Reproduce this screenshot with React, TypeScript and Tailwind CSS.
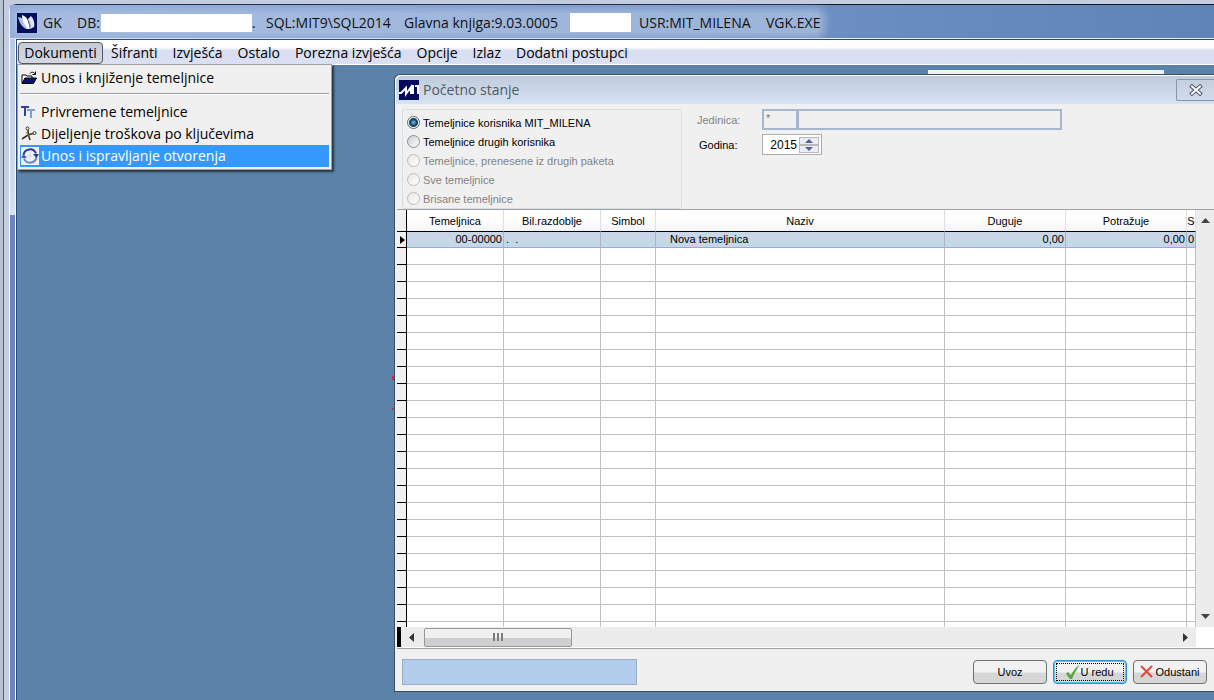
import type { ReactNode } from "react";

const MENU = ["Šifranti", "Izvješća", "Ostalo", "Porezna izvješća", "Opcije", "Izlaz", "Dodatni postupci"];

const FILTERS = [
  { id: "mine", label: "Temeljnice korisnika MIT_MILENA", disabled: false },
  { id: "others", label: "Temeljnice drugih korisnika", disabled: false },
  { id: "imported", label: "Temeljnice, prenesene iz drugih paketa", disabled: true },
  { id: "all", label: "Sve temeljnice", disabled: true },
  { id: "deleted", label: "Brisane temeljnice", disabled: true },
];

const COLUMNS = [
  { label: "Temeljnica", width: "w-[97px]" },
  { label: "Bil.razdoblje", width: "w-[97px]" },
  { label: "Simbol", width: "w-[55px]" },
  { label: "Naziv", width: "" },
  { label: "Duguje", width: "w-[121px]" },
  { label: "Potražuje", width: "w-[121px]" },
  { label: "S", width: "w-[9px]" },
];

const EMPTY_ROWS = Array.from({ length: 22 }, (_, i) => i);

function AppIcon() {
  return (
    <svg width="20" height="20" viewBox="0 0 20 20" className="shrink-0">
      <rect width="20" height="20" fill="#060e5c" />
      <path d="M1 4l4 1 8 11H9C5 14 2 9 1 4z" fill="#b4c0e0" />
      <path d="M5 2c3 1 5 3 6 6l2 8h-2C7 12 5 7 5 2z" fill="#fff" />
      <path d="M11 6l3-3c3 3 4 8 3 11l-4 2c0-4-1-7-2-10z" fill="#dbe3f4" />
      <path d="M12 8c1 3 2 5 1 8" fill="none" stroke="#8d9ccc" />
    </svg>
  );
}

function DialogIcon() {
  return (
    <svg width="20" height="20" viewBox="0 0 20 20" className="shrink-0" fill="none" stroke="#fff" strokeWidth="2">
      <rect width="20" height="20" fill="#060a5c" stroke="none" />
      <path d="M0 13h2l5-5v6l5-7v7M14 5v9M16 6h4M19 6v8" />
    </svg>
  );
}

function FolderIcon() {
  return (
    <svg width="16" height="14" viewBox="0 0 16 14">
      <path d="M1 12V4h4l1 1h5v2" fill="#fff" stroke="#000" />
      <path d="M1 12.500L4 7h11.500l-3 5.500z" fill="#0a1470" stroke="#000" />
      <path d="M9 2.500c1.500-2 4-1.500 5 .5M14.500 0.500v3h-3" fill="none" stroke="#000" />
    </svg>
  );
}

function FontIcon() {
  return (
    <svg width="16" height="14" viewBox="0 0 16 14" fill="none" strokeWidth="2">
      <path d="M0 2h8M4 2v9" stroke="#34409c" />
      <path d="M6 5h8M10 5v8" stroke="#7d9fd4" />
    </svg>
  );
}

function SplitIcon() {
  return (
    <svg width="16" height="16" viewBox="0 0 16 16" fill="none" stroke="#3a3526">
      <circle cx="6.500" cy="2.500" r="1.500" />
      <circle cx="13.500" cy="7" r="1.500" />
      <path d="M7 4l0.500 5 1.500 5M12 7.500L7 9l-6 4" strokeWidth="1.600" />
      <path d="M5 6l4 5" stroke="#8c8468" />
    </svg>
  );
}

function RefreshIcon() {
  return (
    <svg width="18" height="18" viewBox="0 0 18 18" fill="none">
      <rect width="18" height="18" fill="#eef1f8" />
      <path d="M9 5v8M5 9h8" stroke="#d3d9e6" />
      <path d="M2.500 8A6.500 6.500 0 0 1 15 6.500" stroke="#2c3a94" strokeWidth="2" />
      <path d="M15.500 10A6.500 6.500 0 0 1 3 11.500" stroke="#7287b8" strokeWidth="2" />
      <path d="M12 7h6l-2.500 4z" fill="#2c3a94" />
      <path d="M0 11h6L2.500 7z" fill="#4e62a6" />
    </svg>
  );
}

function MenuItem({ icon, children, active = false }: { icon: ReactNode; children: ReactNode; active?: boolean }) {
  return (
    <button
      role="menuitem"
      className={`flex h-[22px] w-full items-center text-left text-sm whitespace-nowrap ${
        active ? "bg-[#3399ff] text-white" : "text-black"
      }`}
    >
      <span className="flex w-[21px] shrink-0 items-center pl-px">{icon}</span>
      {children}
    </button>
  );
}

function DocumentsMenu() {
  return (
    <div
      role="menu"
      className="absolute top-6 left-0 z-20 w-[315px] border border-[#a0a0a0] bg-[#f0f0f0] p-0.5 shadow-[2px_2px_2px_rgba(0,0,0,0.6)]"
    >
      <MenuItem icon={<FolderIcon />}>Unos i knjiženje temeljnice</MenuItem>
      <div className="mt-1 mb-1.5 h-0.5 border-t border-b border-t-[#a0a0a0] border-b-white" />
      <MenuItem icon={<FontIcon />}>Privremene temeljnice</MenuItem>
      <MenuItem icon={<SplitIcon />}>Dijeljenje troškova po ključevima</MenuItem>
      <MenuItem icon={<RefreshIcon />} active>
        Unos i ispravljanje otvorenja
      </MenuItem>
    </div>
  );
}

function TitleBar() {
  return (
    <header className="flex h-[34px] items-center border-b border-[#e6edf8] bg-linear-to-r from-[#8fabd8] via-[#7394c8] to-[#5f84b8] pt-0.5 pl-[7px]">
      <div className="flex h-5 items-center rounded bg-[#b0c3e2]/70 text-sm whitespace-nowrap text-[#111] shadow-[0_0_8px_5px_rgba(176,195,226,0.7)]">
        <AppIcon />
        <span className="w-[39px] pl-1.5">GK</span>
        <span className="w-[25px] pl-px">DB:</span>
        <span className="h-[18px] w-[151px] bg-white" />
        <span className="w-[14px]">.</span>
        <span className="w-[138px]">SQL:MIT9\SQL2014</span>
        <span className="w-[166px]">Glavna knjiga:9.03.0005</span>
        <span className="h-[19px] w-[61px] bg-white" />
        <span className="w-[135px] pl-2">USR:MIT_MILENA</span>
        <span>VGK.EXE</span>
      </div>
    </header>
  );
}

function MenuBar() {
  return (
    <nav className="relative flex h-[26px] items-end gap-px border-t border-b border-t-[#2c4a72] border-b-white bg-linear-to-b from-white from-30% via-[#d8deef] via-45% to-[#dbe0f2] pl-px text-sm whitespace-nowrap text-black">
      <button className="h-[22px] w-[85px] rounded-sm border border-[#55585f] bg-linear-to-b from-[#c6cbd8] to-[#d3d7e2]">
        Dokumenti
      </button>
      {MENU.map((label) => (
        <button key={label} className="h-[22px] px-[7px]">
          {label}
        </button>
      ))}
      <DocumentsMenu />
    </nav>
  );
}

function Filters() {
  return (
    <fieldset className="flex w-[280px] flex-col rounded-xs border border-[#d5dfe5] pt-[3px] pl-1">
      {FILTERS.map((f) => (
        <label
          key={f.id}
          className={`flex h-[19px] items-center gap-[3px] whitespace-nowrap ${f.disabled ? "text-[#838383]" : "text-black"}`}
        >
          <input
            type="radio"
            name="filter"
            defaultChecked={f.id === "mine"}
            disabled={f.disabled}
            className="size-[13px] appearance-none rounded-full border border-[#8e8f8f] bg-linear-to-br from-[#c9ccd0] to-white checked:border-[#5b6e7e] checked:bg-[radial-gradient(circle,#7fc3ea_0,#16476e_3px,#1c3f5c_4px,#f4f4f4_5px)] disabled:border-[#bcbcbc] disabled:from-[#e6e6e6]"
          />
          {f.label}
        </label>
      ))}
    </fieldset>
  );
}

function UnitAndYear() {
  return (
    <div className="flex flex-1 flex-col gap-1 pl-[15px]">
      <div className="flex h-[21px] items-center">
        <label htmlFor="unit" className="w-[65px] shrink-0 text-[#838383]">
          Jedinica:
        </label>
        <input id="unit" disabled defaultValue="*" className="h-[21px] w-9 border-2 border-[#a7b7d0] px-0.5 pb-1 text-[#777]" />
        <input aria-label="Naziv jedinice" disabled className="-ml-px h-[21px] w-[265px] border-2 border-[#a7b7d0]" />
      </div>
      <div className="flex h-[21px] items-center">
        <label htmlFor="year" className="w-[65px] shrink-0 pl-0.5">
          Godina:
        </label>
        <div className="flex h-[21px] w-[60px] items-center border border-[#abadb3] bg-white pr-0.5">
          <input id="year" defaultValue="2015" className="w-9 pr-0.5 text-right text-xs outline-none" />
          <div className="flex flex-1 flex-col">
            <button aria-label="Više" className="flex h-2 items-center justify-center border border-[#b5b8bf] bg-[#eceef2]">
              <svg width="8" height="4" viewBox="0 0 8 4">
                <path d="M0 4l4-4 4 4z" fill="#4f61a6" />
              </svg>
            </button>
            <button aria-label="Manje" className="flex h-2 items-center justify-center border border-[#b5b8bf] bg-[#eceef2]">
              <svg width="8" height="4" viewBox="0 0 8 4">
                <path d="M0 0l4 4 4-4z" fill="#4f61a6" />
              </svg>
            </button>
          </div>
        </div>
      </div>
    </div>
  );
}

function Grid() {
  return (
    <table className="min-w-0 flex-1 table-fixed border-separate border-spacing-0 bg-white">
      <colgroup>
        <col className="w-2.5" />
        {COLUMNS.map((c) => (
          <col key={c.label} className={c.width} />
        ))}
      </colgroup>
      <thead>
        <tr className="h-[22px]">
          <td className="border-r border-b border-black bg-[#f0f0f0] p-0" />
          {COLUMNS.map((c) => (
            <th
              key={c.label}
              className="overflow-hidden border-r border-b border-r-[#dcdfe3] border-b-black bg-linear-to-b from-white from-45% to-[#f2f3f5] p-0 font-normal"
            >
              {c.label}
            </th>
          ))}
        </tr>
      </thead>
      <tbody>
        <tr className="h-4 [&>td]:h-4 [&>td]:overflow-hidden [&>td]:p-0 [&>td]:leading-[15px] [&>td]:whitespace-nowrap [&>td+td]:border-r [&>td+td]:border-b [&>td+td]:border-r-[#a9b4c4] [&>td+td]:border-b-[#1fe4ea] [&>td+td]:bg-[#c8d6e8]">
          <td className="border-r border-b border-black bg-[#f0f0f0]">
            <svg width="6" height="8" viewBox="0 0 6 8" className="ml-auto">
              <path d="M0 0l5 4-5 4z" fill="#000" />
            </svg>
          </td>
          <td className="text-right">
            <span className="pr-px">00-00000</span>
          </td>
          <td>
            <span className="pl-0.5">.&nbsp; .</span>
          </td>
          <td />
          <td>
            <span className="pl-3.5">Nova temeljnica</span>
          </td>
          <td className="text-right">
            <span className="pr-px">0,00</span>
          </td>
          <td className="text-right">
            <span className="pr-px">0,00</span>
          </td>
          <td className="text-center">0</td>
        </tr>
        {EMPTY_ROWS.map((row) => (
          <tr key={row} className="h-[17px]">
            <td className="border-r border-b border-black bg-[#f0f0f0] p-0" />
            {COLUMNS.map((c) => (
              <td key={c.label} className="border-r border-b border-[#c0c0c0] p-0" />
            ))}
          </tr>
        ))}
        <tr className="h-[5px]">
          <td className="border-r border-black bg-[#f0f0f0] p-0" />
          {COLUMNS.map((c) => (
            <td key={c.label} className="border-r border-[#c0c0c0] p-0" />
          ))}
        </tr>
      </tbody>
    </table>
  );
}

function VerticalScroll() {
  return (
    <div className="flex w-[18px] shrink-0 flex-col items-center justify-between bg-[#ececec] py-2">
      <svg width="9" height="5" viewBox="0 0 9 5">
        <path d="M0 5l4.500-5L9 5z" fill="#444" />
      </svg>
      <svg width="9" height="5" viewBox="0 0 9 5">
        <path d="M0 0l4.500 5L9 0z" fill="#444" />
      </svg>
    </div>
  );
}

function HorizontalScroll() {
  return (
    <div className="flex h-[21px] border-b border-white">
      <div className="w-1 bg-black" />
      <div className="flex flex-1 items-center bg-[#ececec] pr-2 pl-2">
        <svg width="5" height="9" viewBox="0 0 5 9">
          <path d="M5 0L0 4.500 5 9z" fill="#333" />
        </svg>
        <div className="ml-2.5 flex h-[19px] w-[148px] items-center justify-center gap-0.5 rounded-xs border border-[#979797] bg-linear-to-b from-[#f0f0f0] from-50% to-[#cfcfd2] to-55%">
          <i className="h-2 w-0.5 bg-[#7c7c7c]" />
          <i className="h-2 w-0.5 bg-[#7c7c7c]" />
          <i className="h-2 w-0.5 bg-[#7c7c7c]" />
        </div>
        <svg width="5" height="9" viewBox="0 0 5 9" className="ml-auto">
          <path d="M0 0l5 4.500L0 9z" fill="#333" />
        </svg>
      </div>
      <div className="w-[18px] bg-white" />
    </div>
  );
}

function Footer() {
  const button =
    "flex h-6 w-[74px] items-center justify-center rounded-sm border bg-linear-to-b from-[#f2f2f2] from-50% to-[#d6d6d6] to-55%";

  return (
    <footer className="flex h-[43px] items-center gap-1.5 border-t border-[#a0a0a0] pt-[3px] pr-[7px] pl-[5px]">
      <div className="mr-auto h-[26px] w-[235px] border border-[#9aafc6] bg-[#b1cdeb]" />
      <button className={`${button} border-[#707070]`}>Uvoz</button>
      <button className={`${button} border-[#2a8fc4] p-0.5 shadow-[inset_0_0_0_1px_#5fc6ee]`}>
        <span className="flex h-full w-full items-center justify-center border border-dotted border-black">
          <svg width="14" height="14" viewBox="0 0 14 14">
            <path d="M0 9l2-2 3 3C7 6 10 2 13.500 0 11 4 8 9 6 14H4z" fill="#58a83c" />
          </svg>
          U redu
        </span>
      </button>
      <button className={`${button} gap-0.5 border-[#707070]`}>
        <svg width="13" height="13" viewBox="0 0 13 13" fill="none" stroke="#e8483a" strokeWidth="2">
          <path d="M1 1l11 11M12 1L1 12" />
        </svg>
        Odustani
      </button>
    </footer>
  );
}

function OpeningBalanceDialog() {
  return (
    <section className="relative flex-1 rounded-tl-md border border-r-0 border-[#3a4c60] bg-[#f0f0f0] font-['Liberation_Sans',sans-serif] text-[11px] leading-[14px] text-black">
      <div className="flex h-[29px] items-start rounded-tl-md border-t border-l border-white bg-linear-to-b from-[#bfcbda] to-[#d6e3f2] pl-[3px]">
        <div className="flex h-7 items-center gap-1">
          <DialogIcon />
          <h2 className="font-['Open_Sans',sans-serif] text-sm text-[#4e5b66]">Početno stanje</h2>
        </div>
        <button
          aria-label="Zatvori"
          className="mt-[3px] ml-auto flex h-[22px] w-[38px] items-center justify-center rounded-l-xs border border-r-0 border-[#8795ad] bg-linear-to-b from-[#c5d0de] to-[#d0dcea]"
        >
          <svg width="14" height="12" viewBox="0 0 14 12" fill="none" strokeLinecap="square">
            <path d="M3 2.500l8 7M11 2.500l-8 7" stroke="#4d5563" strokeWidth="4" />
            <path d="M3 2.500l8 7M11 2.500l-8 7" stroke="#fff" strokeWidth="2" />
          </svg>
        </button>
      </div>
      <div className="pl-0.5">
        <div className="flex pt-[5px] pl-[5px]">
          <Filters />
          <UnitAndYear />
        </div>
        <div className="flex border-t border-[#a0a0a0]">
          <Grid />
          <VerticalScroll />
        </div>
        <HorizontalScroll />
        <Footer />
      </div>
    </section>
  );
}

export default function App() {
  return (
    <div className="flex min-h-screen overflow-hidden bg-[#c5cde0] font-['Open_Sans',sans-serif]">
      <div className="w-1 border-r border-[#4c6078] bg-[#b5c3d3]" />
      <div className="mt-1 ml-[5px] flex min-w-0 flex-1 flex-col rounded-tl-lg border-t border-l border-t-[#10182a] border-l-white bg-[#a9bddf]">
        <TitleBar />
        <div className="flex flex-1">
          <div className="w-[7px] border-r border-[#2a4c78] bg-[linear-gradient(#b9cae4,#d5e0f0_176px,#6c84c0_176px)]">
            <div className="ml-auto h-full w-px bg-white" />
          </div>
          <div className="flex min-w-0 flex-1 flex-col bg-[#5b82a8]">
            <MenuBar />
            <main className="relative flex flex-1 items-start pt-[9px] pl-[377px]">
              <div className="absolute top-[5px] right-[50px] h-1 w-[236px] bg-[#f2f2f2]" />
              <div className="absolute top-[311px] left-[375px] h-1 w-0.5 bg-[#d8243c]" />
              <div className="absolute top-[343px] left-[375px] size-0.5 bg-[#a8386a]" />
              <OpeningBalanceDialog />
            </main>
          </div>
        </div>
      </div>
    </div>
  );
}
